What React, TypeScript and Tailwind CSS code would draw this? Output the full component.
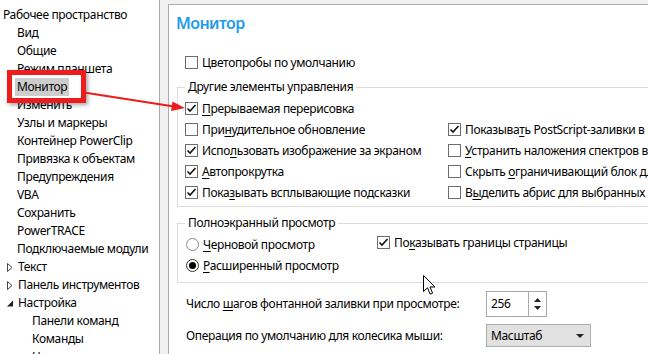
import React from "react";

type TreeItem = { text: string; level: 0 | 1 | 2; arrow?: "closed" | "open"; selected?: boolean };

const tree: TreeItem[] = [
  { text: "Рабочее пространство", level: 0 },
  { text: "Вид", level: 1 },
  { text: "Общие", level: 1 },
  { text: "Режим планшета", level: 1 },
  { text: "Монитор", level: 1, selected: true },
  { text: "Изменить", level: 1 },
  { text: "Узлы и маркеры", level: 1 },
  { text: "Контейнер PowerClip", level: 1 },
  { text: "Привязка к объектам", level: 1 },
  { text: "Предупреждения", level: 1 },
  { text: "VBA", level: 1 },
  { text: "Сохранить", level: 1 },
  { text: "PowerTRACE", level: 1 },
  { text: "Подключаемые модули", level: 1 },
  { text: "Текст", level: 0, arrow: "closed" },
  { text: "Панель инструментов", level: 0, arrow: "closed" },
  { text: "Настройка", level: 0, arrow: "open" },
  { text: "Панели команд", level: 2 },
  { text: "Команды", level: 2 },
  { text: "Цветовая палитра", level: 2 },
];

const indent = ["pl-[1px]", "pl-[15px]", "pl-[30px]"];

interface LabelProps {
  pre?: string;
  u?: string;
  post?: string;
}

const Label = ({ pre = "", u = "", post = "" }: LabelProps) => (
  <span className="whitespace-nowrap">
    {pre}
    {u && <u className="underline-offset-2">{u}</u>}
    {post}
  </span>
);

const Check = ({ checked }: { checked?: boolean }) => (
  <span className="w-[13px] h-[13px] shrink-0 border border-[#6d6d6d] bg-white flex items-center justify-center">
    {checked && (
      <svg width="11" height="11" viewBox="0 0 11 11">
        <path d="M1.5 5.5 L4 8 L9.5 2" fill="none" stroke="#111" strokeWidth="1.6" />
      </svg>
    )}
  </span>
);

const Radio = ({ checked }: { checked?: boolean }) => (
  <span
    className={`w-[13px] h-[13px] shrink-0 rounded-full border bg-white flex items-center justify-center ${
      checked ? "border-[#333]" : "border-[#8a8a8a]"
    }`}
  >
    {checked && <span className="w-[7px] h-[7px] rounded-full bg-black" />}
  </span>
);

const CheckRow = ({ checked, ...label }: LabelProps & { checked?: boolean }) => (
  <div className="h-[21px] flex items-center gap-[4px]">
    <Check checked={checked} />
    <Label {...label} />
  </div>
);

const RadioRow = ({ checked, ...label }: LabelProps & { checked?: boolean }) => (
  <div className="h-[21px] flex items-center gap-[4px] pl-px">
    <Radio checked={checked} />
    <Label {...label} />
  </div>
);

export default function App() {
  return (
    <div className="relative w-[648px] h-[354px] overflow-hidden bg-[#f0f0f0] flex text-[12px] leading-[16px] tracking-[-0.35px] text-black font-['Noto_Sans',sans-serif]">
      {/* Tree */}
      <div className="w-[160px] shrink-0 bg-white border-r border-[#acacac] pt-[6px]">
        {tree.map((item) => (
          <div key={item.text} className={`h-[18px] flex items-center ${item.arrow ? "pl-[7px]" : indent[item.level]}`}>
            {item.arrow === "closed" && (
              <svg width="9" height="9" viewBox="0 0 9 9" className="shrink-0">
                <path d="M0.5 0.5 L5 4.5 L0.5 8.5 Z" fill="white" stroke="#444" strokeWidth="1" />
              </svg>
            )}
            {item.arrow === "open" && (
              <svg width="9" height="9" viewBox="0 0 9 9" className="shrink-0">
                <path d="M6 1.5 L6 7.5 L0 7.5 Z" fill="#222" />
              </svg>
            )}
            <span className={`px-[2px] h-[18px] flex items-center whitespace-nowrap ${item.selected ? "bg-[#cdcdcd]" : ""}`}>
              {item.text}
            </span>
          </div>
        ))}
      </div>

      {/* Settings page */}
      <div className="w-[560px] shrink-0 mt-[4px] ml-[8px] bg-white border-l border-t border-[#acacac] pl-[8px]">
        <div className="mt-[8px] h-[20px] -ml-px text-[16px] leading-[20px] font-semibold tracking-[-0.6px] text-[#1e9be9]">Монитор</div>

        <div className="mt-[19px] pl-[8px]">
          <CheckRow pre="Цветопробы по умолчанию" />
        </div>

        <fieldset className="mt-[6px] w-[540px] border border-[#dcdcdc] pl-[7px] pb-[3px]">
          <legend className="px-[3px] leading-[16px]">Другие элементы управления</legend>
          <div className="mt-[3px] grid grid-cols-[263px_auto]">
            <CheckRow checked u="П" post="рерываемая перерисовка" />
            <div />
            <CheckRow pre="При" u="н" post="удительное обновление" />
            <CheckRow checked pre="Показыва" u="т" post="ь PostScript-заливки в программе" />
            <CheckRow checked pre="Испо" u="л" post="ьзовать изображение за экраном" />
            <CheckRow u="У" post="странить наложения спектров в режиме" />
            <CheckRow checked u="А" post="втопрокрутка" />
            <CheckRow pre="Скрыть " u="о" post="граничивающий блок для" />
            <CheckRow checked pre="Пока" u="з" post="ывать всплывающие подсказки" />
            <CheckRow pre="В" u="ы" post="делить абрис для выбранных объектов" />
          </div>
        </fieldset>

        <fieldset className="mt-[8px] w-[540px] border border-[#dcdcdc] pl-[7px] pb-[6px]">
          <legend className="px-[3px] leading-[16px]">Полноэкранный просмотр</legend>
          <div className="mt-[3px] grid grid-cols-[192px_auto]">
            <RadioRow u="Ч" post="ерновой просмотр" />
            <div className="-mt-[2px]">
              <CheckRow checked pre="По" u="к" post="азывать границы страницы" />
            </div>
            <RadioRow checked u="Р" post="асширенный просмотр" />
            <div />
          </div>
        </fieldset>

        <div className="mt-[8px] h-[26px] flex items-center pl-[9px]">
          <div className="w-[300px] shrink-0">
            <Label pre="Число " u="ш" post="агов фонтанной заливки при просмотре:" />
          </div>
          <div className="w-[61px] h-[26px] flex border border-[#a9a9a9] bg-white">
            <div className="flex-1 flex items-center pl-[4px]">256</div>
            <div className="w-[18px] border-l border-[#a9a9a9] flex flex-col items-center justify-between py-[6px]">
              <svg width="7" height="4" viewBox="0 0 7 4">
                <path d="M0 4 L3.5 0 L7 4 Z" fill="#222" />
              </svg>
              <svg width="7" height="4" viewBox="0 0 7 4">
                <path d="M0 0 L7 0 L3.5 4 Z" fill="#222" />
              </svg>
            </div>
          </div>
        </div>

        <div className="mt-[7px] h-[23px] flex items-center pl-[9px]">
          <div className="w-[300px] shrink-0">
            <Label pre="Операция по умолчанию для колесика мыши:" />
          </div>
          <div className="w-[105px] h-[23px] flex items-center justify-between bg-[#e1e1e1] border border-[#adadad] pl-[4px] pr-[6px]">
            <span>Масштаб</span>
            <svg width="8" height="4" viewBox="0 0 8 4">
              <path d="M0 0 L8 0 L4 4 Z" fill="#222" />
            </svg>
          </div>
        </div>
      </div>

      {/* Annotation: red frame and arrow */}
      <div className="absolute left-[7px] top-[70px] w-[79px] h-[33px] border-[5px] border-[#ee1c1c] shadow-[2px_2px_4px_rgba(0,0,0,0.35)]" />
      <svg className="absolute left-0 top-0 pointer-events-none" width="648" height="354" viewBox="0 0 648 354">
        <line x1="84" y1="92.5" x2="174" y2="106.5" stroke="#ee1c1c" strokeWidth="2" />
        <path d="M185 108 L172.5 101.5 L171 111 Z" fill="#ee1c1c" />
      </svg>

      {/* Mouse pointer */}
      <svg className="absolute left-[423px] top-[275px] pointer-events-none" width="13" height="21" viewBox="0 0 13 21">
        <path d="M0.5 0.5 L0.5 16.5 L4.5 12.8 L7.2 19.2 L9.6 18.2 L7 12 L12 12 Z" fill="white" stroke="black" strokeWidth="1" strokeLinejoin="round" />
      </svg>
    </div>
  );
}
